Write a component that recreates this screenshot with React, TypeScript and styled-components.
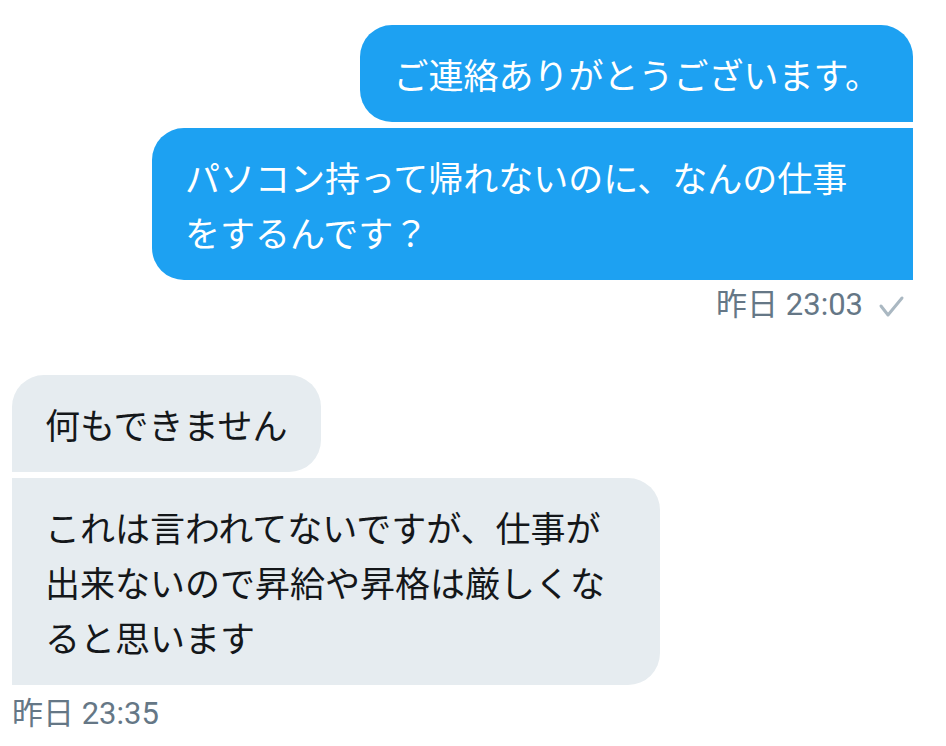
import React from 'react';
import styled, { createGlobalStyle, css } from 'styled-components';

const GlobalStyle = createGlobalStyle`
  html, body {
    margin: 0;
    padding: 0;
    background: #ffffff;
  }
  body {
    font-family: Roboto, "Noto Sans CJK JP", sans-serif;
    -webkit-font-smoothing: antialiased;
  }
`;

const Thread = styled.div`
  width: 946px;
  height: 746px;
  padding-top: 25px;
  box-sizing: border-box;
  display: flex;
  flex-direction: column;
  overflow: hidden;
`;

const Group = styled.div<{ $side: 'sent' | 'received' }>`
  display: flex;
  flex-direction: column;
  gap: 6px;
  align-items: ${p => (p.$side === 'sent' ? 'flex-end' : 'flex-start')};
  padding: ${p => (p.$side === 'sent' ? '0 33px 0 0' : '0 0 0 12px')};
`;

type Corner = 'first' | 'last';

const R = '32px';

const sentCorners = {
  first: css`border-radius: ${R} ${R} 0 ${R};`,
  last: css`border-radius: ${R} 0 0 ${R};`,
};

const receivedCorners = {
  first: css`border-radius: ${R} ${R} ${R} 0;`,
  last: css`border-radius: 0 ${R} ${R} 0;`,
};

const Bubble = styled.div<{ $side: 'sent' | 'received'; $pos: Corner; $width?: number }>`
  box-sizing: border-box;
  padding: 21px 33px 21px 33px;
  font-family: "Noto Sans CJK JP", "Noto Sans", sans-serif;
  font-size: 35px;
  line-height: 55px;
  white-space: nowrap;
  width: ${p => (p.$width ? `${p.$width}px` : 'auto')};
  background: ${p => (p.$side === 'sent' ? '#1da1f2' : '#e6ecf0')};
  color: ${p => (p.$side === 'sent' ? '#ffffff' : '#14171a')};
  ${p => (p.$side === 'sent' ? sentCorners[p.$pos] : receivedCorners[p.$pos])}
`;

const Meta = styled.div<{ $side: 'sent' | 'received' }>`
  display: flex;
  align-items: center;
  gap: 12px;
  height: 36px;
  line-height: 36px;
  font-size: 31px;
  color: #657786;
  margin-top: ${p => (p.$side === 'sent' ? '1px' : '5px')};
  align-self: ${p => (p.$side === 'sent' ? 'flex-end' : 'flex-start')};
  margin-right: ${p => (p.$side === 'sent' ? '4px' : '0')};
`;

const Spacer = styled.div`
  height: 52px;
  flex-shrink: 0;
`;

const Check = () => (
  <svg width="34" height="30" viewBox="0 0 34 30">
    <path
      d="M6 16 L13 25 L27 8"
      fill="none"
      stroke="#aab8c2"
      strokeWidth="3"
      strokeLinecap="round"
      strokeLinejoin="round"
    />
  </svg>
);

export default function App() {
  return (
    <>
      <GlobalStyle />
      <Thread>
        <Group $side="sent">
          <Bubble $side="sent" $pos="first">ご連絡ありがとうございます。</Bubble>
          <Bubble $side="sent" $pos="last" $width={761}>
            パソコン持って帰れないのに、なんの仕事
            <br />
            をするんです？
          </Bubble>
          <Meta $side="sent">
            <span>昨日 23:03</span>
            <Check />
          </Meta>
        </Group>
        <Spacer />
        <Group $side="received">
          <Bubble $side="received" $pos="first">何もできません</Bubble>
          <Bubble $side="received" $pos="last" $width={648}>
            これは言われてないですが、仕事が
            <br />
            出来ないので昇給や昇格は厳しくな
            <br />
            ると思います
          </Bubble>
          <Meta $side="received">
            <span>昨日 23:35</span>
          </Meta>
        </Group>
      </Thread>
    </>
  );
}
